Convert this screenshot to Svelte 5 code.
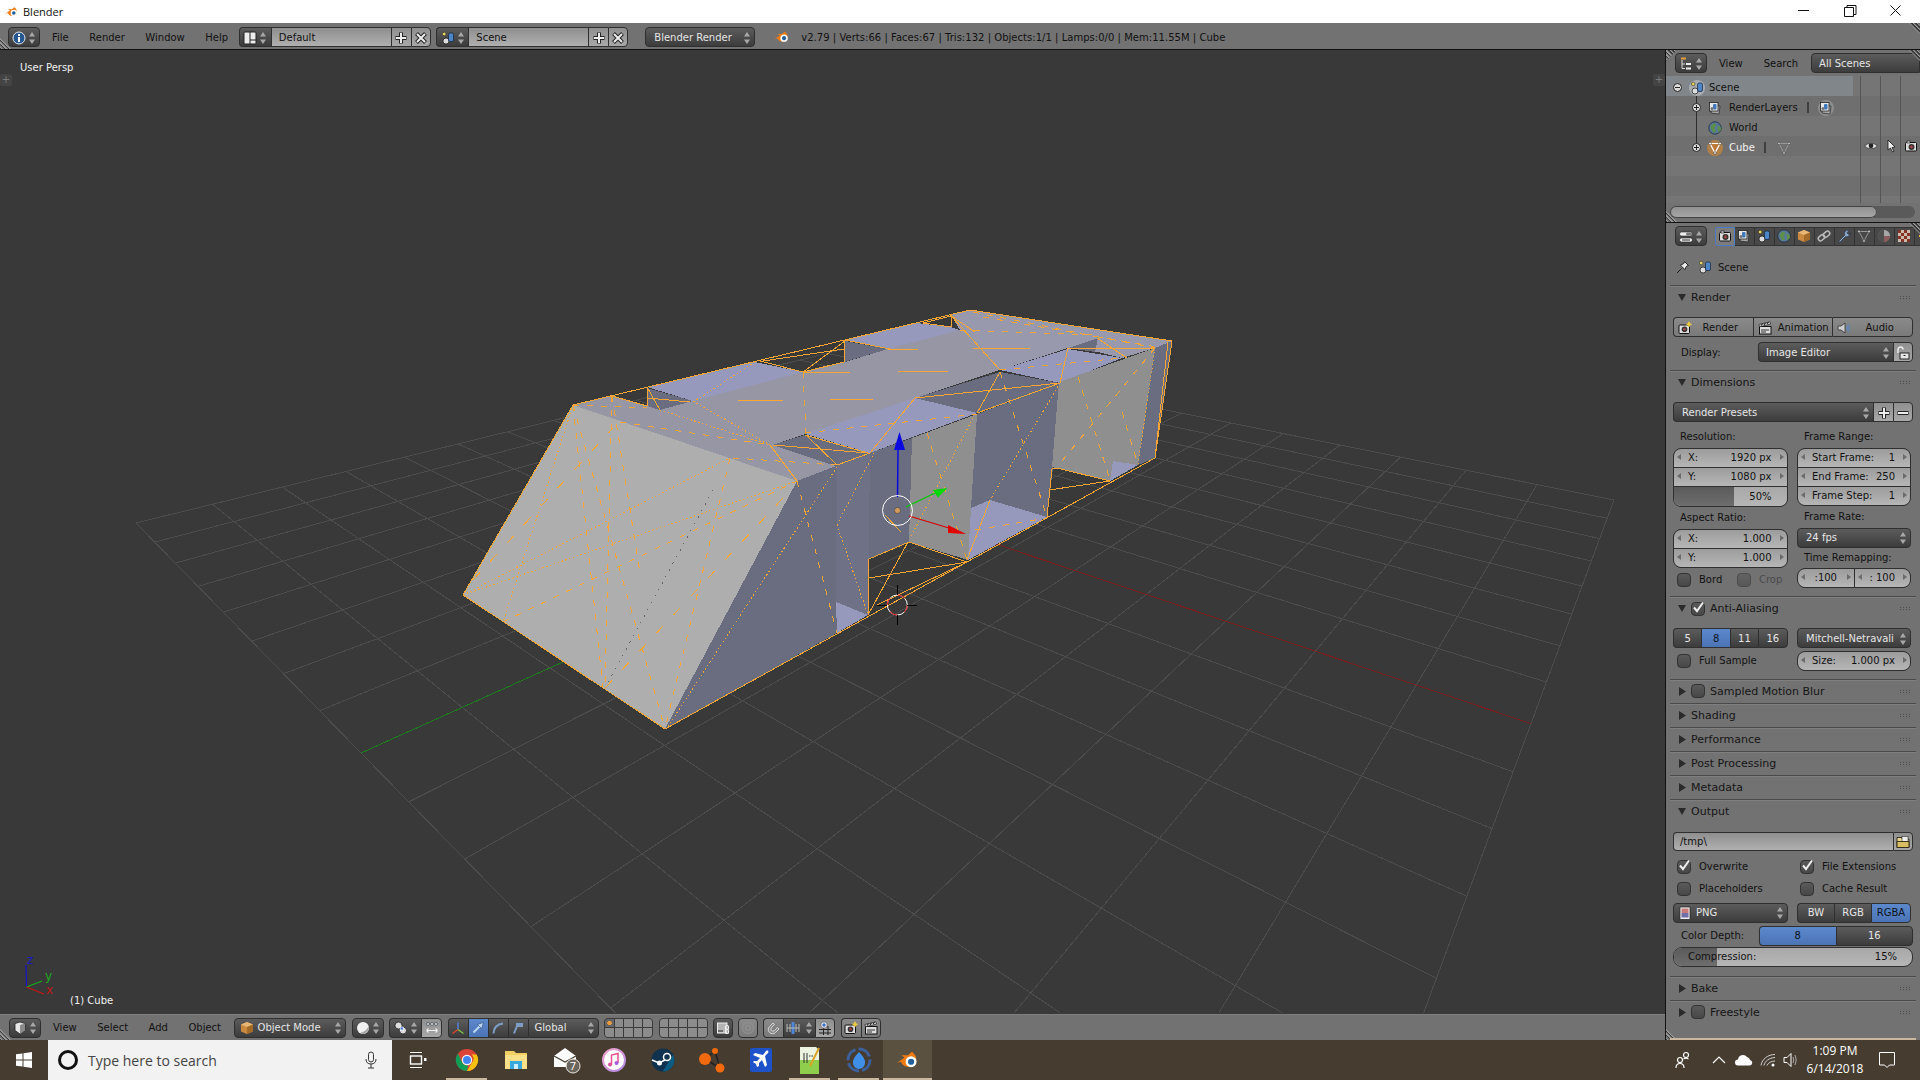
<script>
	// grid corners measured on the screenshot, grid runs -8..8 both ways
	function homography(src, dst) {
		const m = [];
		src.forEach(([u, v], i) => {
			const [x, y] = dst[i];
			m.push([u, v, 1, 0, 0, 0, -u * x, -v * x, x]);
			m.push([0, 0, 0, u, v, 1, -u * y, -v * y, y]);
		});
		for (let c = 0; c < 8; c++) {
			let p = c;
			for (let r = c + 1; r < 8; r++) if (Math.abs(m[r][c]) > Math.abs(m[p][c])) p = r;
			[m[c], m[p]] = [m[p], m[c]];
			for (let r = 0; r < 8; r++) {
				if (r === c) continue;
				const f = m[r][c] / m[c][c];
				for (let k = c; k < 9; k++) m[r][k] -= f * m[c][k];
			}
		}
		return m.map((row, i) => row[8] / row[i]);
	}

	const h = homography(
		[[-8, -8], [8, 8], [8, 0], [0, -8]],
		[[136, 523], [1614, 500], [1531, 723.6], [361, 753]]
	);
	const project = (u, v) => {
		const w = h[6] * u + h[7] * v + 1;
		return [(h[0] * u + h[1] * v + h[2]) / w, (h[3] * u + h[4] * v + h[5]) / w];
	};

	const GRID = '#4c4c4c';
	const gridLines = [];
	for (let i = -8; i <= 8; i++) {
		gridLines.push({ a: project(i, -8), b: project(i, 8), c: i === 0 ? '#1f7a1f' : GRID });
		gridLines.push({ a: project(-8, i), b: project(8, i), c: i === 0 ? '#7d1e1e' : GRID });
	}
	gridLines.sort((p, q) => (p.c === GRID ? 0 : 1) - (q.c === GRID ? 0 : 1));

	const LIGHT = '#aeaeae', BAND = '#9696a4', BLUE = '#9699bb', DARK = '#6a6c80', MID = '#8f8f8f';
	const faces = [
		[LIGHT, '573,405 463,595 665,729 797,481'],
		[BAND, '573,405 612,396 647,406 660,410 693,401 803,372 845,362 888,349 920,340 960,330 1000,370 915,398 805,434 772,445 836,466 797,481'],
		['#9899ac', '951,315 970,310 1172,341 1155,348 1122,358 1098,352 1068,348 1000,370 960,330'],
		[BLUE, '647,387 755,362 803,372 693,401'],
		[DARK, '647,388 693,401 660,410 647,406'],
		[BLUE, '845,340 917,323 950,327 960,330 888,349'],
		[DARK, '845,341 888,349 844,362'],
		[BLUE, '805,434 915,398 977,413 870,453'],
		[DARK, '805,435 870,453 836,466 772,445'],
		[BLUE, '1000,370 1068,349 1122,358 1060,383'],
		[DARK, '1098,338 1068,348 1095,352'],
		[DARK, '1000,372 1060,383 977,413 915,398'],
		[DARK, '797,481 836,466 870,453 912,438 909,542 869,559 868,615 837,633 665,729'],
		['#6f7186', '837,466 870,453 868,615 836,602'],
		[DARK, '977,414 1060,383 1053,468 1047,517 990,500 971,508'],
		[MID, '912,438 977,414 971,508 968,560 909,542'],
		[BLUE, '971,508 990,500 1047,517 968,560'],
		[MID, '1059,382 1155,348 1138,465 1113,461 1110,481 1052,467'],
		[BLUE, '1113,461 1138,465 1110,481'],
		[DARK, '1155,348 1172,341 1155,458 1138,465'],
		[BLUE, '836,602 868,615 837,633']
	];

	const dash = ['', '6 8', '1.5 2.5', '10 15'];
	// x1, y1, x2, y2, style: 0 solid, 1 dashed, 2 dotted, 3 sparse
	const wires = [
		[573, 405, 463, 595, 0], [463, 595, 665, 729, 0], [665, 729, 1155, 458, 0], [1155, 458, 1172, 341, 0],
		[1172, 341, 970, 310, 0], [970, 310, 573, 405, 0],
		[573, 405, 603, 688, 1], [612, 396, 605, 688, 1], [612, 396, 640, 573, 1], [573, 405, 503, 622, 2],
		[573, 405, 665, 729, 1], [463, 595, 730, 458, 2], [503, 622, 797, 481, 1], [463, 595, 797, 481, 2],
		[730, 458, 665, 729, 1], [473, 580, 613, 428, 3], [783, 498, 605, 688, 3], [837, 467, 667, 728, 2],
		[797, 481, 837, 633, 1], [770, 445, 797, 481, 0], [620, 422, 770, 445, 1], [733, 458, 837, 465, 1],
		[660, 410, 770, 445, 2], [573, 405, 647, 408, 1], [693, 401, 770, 445, 2], [803, 372, 806, 434, 1],
		[755, 362, 693, 402, 2], [760, 361, 803, 372, 0], [845, 341, 844, 362, 0], [803, 372, 844, 362, 0],
		[763, 361, 844, 349, 0], [803, 372, 845, 341, 0], [803, 372, 850, 372, 0], [738, 400, 783, 400, 0],
		[830, 399, 873, 399, 0], [773, 445, 868, 453, 0], [806, 435, 837, 465, 0], [805, 435, 868, 453, 0],
		[837, 465, 870, 453, 0], [870, 453, 915, 398, 0], [805, 433, 977, 414, 1], [837, 525, 868, 615, 2],
		[837, 525, 877, 447, 2], [612, 396, 647, 406, 0], [647, 387, 647, 406, 0], [647, 387, 660, 410, 0],
		[647, 398, 690, 402, 0], [915, 398, 1060, 383, 0], [977, 413, 1060, 383, 0], [1000, 372, 977, 413, 0],
		[1000, 372, 1047, 517, 1], [1060, 383, 990, 500, 2], [973, 418, 910, 538, 2], [927, 433, 967, 560, 1],
		[990, 500, 967, 560, 0], [975, 530, 1047, 518, 1], [952, 317, 1000, 370, 0], [1068, 348, 1060, 383, 0],
		[1068, 348, 1155, 348, 0], [1000, 370, 1122, 358, 1], [1078, 377, 1110, 480, 1], [1155, 348, 1057, 467, 1],
		[1122, 412, 1138, 465, 1], [973, 348, 1030, 348, 0], [898, 371, 948, 371, 0], [845, 340, 890, 349, 0],
		[888, 349, 918, 349, 0], [950, 315, 975, 332, 0], [960, 330, 1093, 335, 1], [983, 317, 1157, 347, 1],
		[973, 312, 1155, 348, 1], [869, 559, 909, 542, 0], [909, 542, 967, 562, 0], [869, 578, 967, 562, 0],
		[869, 559, 868, 615, 0], [908, 542, 868, 615, 0], [877, 605, 967, 562, 0], [1052, 469, 1047, 517, 0],
		[1052, 469, 1057, 468, 0], [1057, 468, 1110, 481, 0], [1049, 490, 1110, 481, 0], [1155, 348, 1138, 465, 2],
		[1168, 342, 1155, 458, 0], [1097, 338, 1127, 358, 0], [923, 323, 951, 316, 0], [923, 323, 951, 327, 0],
		[951, 315, 951, 327, 0], [885, 515, 901, 532, 0]
	];

	const tabs = ['camera', 'layers', 'scene', 'world', 'box', 'link', 'wrench', 'meshGrey', 'material', 'checker', 'particle'];

	const I = {
		blender:
			'<path d="M.5 8.8 5 5.6 3 4.3h4L9.3 2.2l1 .8a4.6 4.6 0 1 1-6.3 6.8L2.8 8z" fill="#ef7a12"/><circle cx="8.8" cy="8" r="3.2" fill="#fff"/><circle cx="8.8" cy="8" r="1.8" fill="#20609f"/>',
		info: '<circle cx="7" cy="7" r="6" fill="#27578f" stroke="#dfe6ee"/><path d="M6 6h2v5H6zM6 3h2v2H6z" fill="#fff"/>',
		layout: '<rect x="1" y="1" width="12" height="12" rx="1" fill="#eee" stroke="#222"/><path d="M7 1v12M7 9h6" stroke="#222"/>',
		scene: '<circle cx="5" cy="10" r="3" fill="#ddd" stroke="#111" stroke-width=".7"/><rect x="7.5" y="2" width="5" height="8.5" rx="1.5" fill="#4d86c8" stroke="#13233a" stroke-width=".7"/><circle cx="3.2" cy="3" r="1.8" fill="#e6d85a" stroke="#333" stroke-width=".6"/>',
		plus: '<path d="M7 1.5v11M1.5 7h11" stroke="#222" stroke-width="4"/><path d="M7 2v10M2 7h10" stroke="#eee" stroke-width="2"/>',
		minus: '<path d="M1.5 7h11" stroke="#222" stroke-width="4"/><path d="M2 7h10" stroke="#eee" stroke-width="2"/>',
		cross: '<path d="M2.5 2.5l9 9M11.5 2.5l-9 9" stroke="#222" stroke-width="4"/><path d="M3 3l8 8M11 3l-8 8" stroke="#eee" stroke-width="2"/>',
		layers: '<path d="M4 4l8 1-1 8-8-1z" fill="#aaa" stroke="#222" stroke-width=".7"/><rect x="1.5" y="1.5" width="8.5" height="8.5" fill="#e8e8e8" stroke="#222" stroke-width=".8"/><rect x="5" y="3" width="3.5" height="5.5" rx="1" fill="#3f78bb"/><circle cx="4" cy="7.5" r="1.6" fill="#777"/>',
		world: '<circle cx="7" cy="7" r="6.2" fill="#56789c" stroke="#1c2a38" stroke-width=".8"/><path d="M2.5 5 6 2.5 8.5 4 6.5 7 8 10 5.5 12 3.5 8.5zM9.5 5l3 .5.5 3.5-3 2.5z" fill="#5d8f4c"/>',
		mesh: '<path d="M2 2.5h10L7 12z" fill="#c8752a" fill-opacity=".5" stroke="#fff" stroke-width="1.2"/><g fill="#fff" stroke="#222" stroke-width=".5"><circle cx="2" cy="2.5" r="1.3"/><circle cx="12" cy="2.5" r="1.3"/><circle cx="7" cy="12" r="1.3"/></g>',
		meshGrey: '<path d="M2 2.5h10L7 12z" fill="none" stroke="#999"/><g fill="#ccc" stroke="#333" stroke-width=".5"><circle cx="2" cy="2.5" r="1.3"/><circle cx="12" cy="2.5" r="1.3"/><circle cx="7" cy="12" r="1.3"/></g>',
		eye: '<path d="M.5 7Q7 1.5 13.5 7 7 12.5.5 7z" fill="#eee" stroke="#222" stroke-width=".6"/><circle cx="7" cy="6.8" r="2.4" fill="#222"/>',
		cursor: '<path d="M4 1v10l2.5-2 2 4 1.5-.8-2-3.7 3-.5z" fill="#eee" stroke="#111" stroke-width=".8"/>',
		camera: '<rect x="1.5" y="3.5" width="11" height="8.5" rx="1" fill="#ddd" stroke="#111"/><rect x="3" y="2" width="3" height="2" fill="#ddd" stroke="#111" stroke-width=".6"/><circle cx="7.5" cy="8" r="3" fill="#333"/><circle cx="7.5" cy="8" r="1.4" fill="#a44"/>',
		renderCam: '<rect x="1" y="4" width="10.5" height="8.5" rx="1" fill="#ddd" stroke="#111"/><circle cx="6.5" cy="8.3" r="2.8" fill="#333"/><circle cx="6.5" cy="8.3" r="1.3" fill="#a44"/><path d="M11 .8v5M8.5 3.3h5" stroke="#f0cc3c" stroke-width="1.7"/>',
		tree: '<path d="M2 1.5h5" stroke="#e8a23c" stroke-width="2"/><path d="M3 3v8.5h3M3 7h3" stroke="#ddd" fill="none"/><path d="M7 7h5M7 11.5h5" stroke="#eee" stroke-width="2"/>',
		props: '<rect x=".5" y="2" width="13" height="4" rx="2" fill="#eee" stroke="#222" stroke-width=".6"/><rect x="7" y="2.5" width="6" height="3" rx="1.5" fill="#777"/><rect x=".5" y="8" width="13" height="4" rx="2" fill="#eee" stroke="#222" stroke-width=".6"/><path d="M3 10h8" stroke="#333"/>',
		box: '<path d="M7 1l6 2.5v7L7 13l-6-2.5v-7z" fill="#c98a3f"/><path d="M7 1l6 2.5L7 6 1 3.5z" fill="#e8b776"/><path d="M7 6v7l6-2.5v-7z" fill="#a36a28"/>',
		link: '<g fill="none" stroke="#bbb" stroke-width="1.5"><rect x="1" y="6.5" width="7" height="4.5" rx="2.2" transform="rotate(-40 4.5 8.7)"/><rect x="6" y="3" width="7" height="4.5" rx="2.2" transform="rotate(-40 9.5 5.2)"/></g>',
		wrench: '<path d="M1.5 12.5 8 6a3.2 3.2 0 0 1 4-4.5L10 3.5l.8 1.6 1.7.3L13 3.500A3.5 3.5 0 0 1 8.5 7.5L3 13z" fill="#8fb0d6" stroke="#223" stroke-width=".5"/>',
		material: '<circle cx="7" cy="7" r="6" fill="#7d7d7d"/><path d="M7 1a6 6 0 0 0 0 12z" fill="#4f4f4f"/><path d="M7 1a6 6 0 0 1 6 6H7z" fill="#a6a6a6"/><path d="M7 7h6a6 6 0 0 1-6 6z" fill="#8b5c5c"/>',
		checker: '<rect x="1" y="1" width="12" height="12" fill="#c9baa9"/><path d="M1 1h3v3H1zM7 1h3v3H7zM4 4h3v3H4zM10 4h3v3h-3zM1 7h3v3H1zM7 7h3v3H7zM4 10h3v3H4zM10 10h3v3h-3z" fill="#86332a"/>',
		particle: '<path d="M2 7h12" stroke="#e8b33c" stroke-width="2"/>',
		pin: '<path d="M1 13l4.5-4.5M8.5 1.5l4 4-2 .7-1.7 3.3-4.3-4.3 3.3-1.7z" fill="#eee" stroke="#222"/>',
		clapper: '<rect x="1.5" y="5.5" width="11.5" height="7.5" fill="#ddd" stroke="#111"/><path d="M1 3.5 12 .8l.6 2.2L1.5 5.8z" fill="#ddd" stroke="#111" stroke-width=".6"/><path d="M3 9h8M3 11h5" stroke="#333"/><path d="M3 4.5l1.5-1.9M6 3.8l1.5-1.9M9 3l1.5-1.9" stroke="#222" stroke-width="1.1"/>',
		speaker: '<path d="M1 5h3l4-3v10L4 9H1z" fill="#ccc" stroke="#222" stroke-width=".7"/><path d="M9.5 4.5q2 2.5 0 5M11 3q3.2 4 0 8" stroke="#5a86c6" fill="none" stroke-width="1.1"/>',
		lock: '<rect x="4" y="7" width="9" height="6" fill="#e8e8e8" stroke="#222"/><path d="M2 7V3.5a2.5 2.5 0 0 1 5 0" stroke="#eee" fill="none" stroke-width="1.4"/><path d="M7.5 9.5h2" stroke="#222"/>',
		folder: '<path d="M1 4V2.5h5V4h7v8.5H1z" fill="#e9d68f" stroke="#2a2413" stroke-width=".9"/><rect x="6" y="1.5" width="6" height="5" fill="#eee" stroke="#333" stroke-width=".6"/><path d="M1 6.5h12v6H1z" fill="#d9bd62" stroke="#2a2413" stroke-width=".9"/>',
		image: '<rect x="2" y="1" width="10" height="12.5" fill="#eee" stroke="#222" stroke-width=".7"/><rect x="3.5" y="2.5" width="7" height="4.5" fill="#c97a7a"/><rect x="3.5" y="7" width="7" height="4.5" fill="#6e6ea8"/>',
		shade: '<path d="M2 2.5 7 1l5 1.5v7L7 13l-5-3.5z" fill="#e8e8e8" stroke="#222" stroke-width=".8"/><path d="M7 4 12 2.5v7L7 13z" fill="#8a8a8a"/>',
		sphere: '<circle cx="7" cy="7" r="6" fill="#f2f2f2"/><path d="M7 13a6 6 0 0 0 5.5-8Q11 10 4 11.9 5.5 13 7 13z" fill="#a9a9a9"/>',
		pivot: '<circle cx="4.5" cy="4.5" r="3.5" fill="#ddd" stroke="#111" stroke-width=".7"/><circle cx="9" cy="9.5" r="3.5" fill="#ddd" stroke="#111" stroke-width=".7"/><rect x="6.2" y="6" width="3" height="3" fill="#3a6fd0" stroke="#fff" stroke-width=".7"/>',
		origin: '<g fill="#cfd8e6" stroke="#222" stroke-width=".5"><circle cx="3" cy="3" r="1.5"/><circle cx="7" cy="3" r="1.5"/><circle cx="11" cy="3" r="1.5"/></g><path d="M1.5 9.5h11M1.5 9.5l2-2M1.5 9.5l2 2M12.5 9.5l-2-2M12.5 9.5l-2 2" stroke="#eee" fill="none" stroke-width="1.1"/>',
		axes: '<path d="M7 8.5V1.5" stroke="#4f7fd6" stroke-width="1.5"/><path d="M7 8.5 1.5 12.5" stroke="#d9442f" stroke-width="1.5"/><path d="M7 8.5 12.5 12.5" stroke="#7cc043" stroke-width="1.5"/>',
		arrow: '<path d="M2.5 11.5 9 5" stroke="#bcd6f4" stroke-width="2"/><path d="M12.5 1.5 6.5 3.5l4 4z" fill="#bcd6f4" stroke="#24405f" stroke-width=".5"/>',
		rotate: '<path d="M2.5 12.5Q3 3.5 12 2.5" fill="none" stroke="#7d9dc4" stroke-width="2"/>',
		scale: '<path d="M3 12.5 6 5" stroke="#7d9dc4" stroke-width="2"/><rect x="5" y="2" width="7" height="4" fill="#7d9dc4"/>',
		lockLayers: '<rect x="1.5" y="2" width="9.5" height="10" fill="#b5b5b5" stroke="#eee"/><path d="M2 10h5" stroke="#222"/><rect x="9.5" y="4.5" width="3" height="4" rx="1.3" fill="none" stroke="#eee" stroke-width="1.2"/><rect x="9.5" y="8.5" width="3" height="4" rx="1.3" fill="none" stroke="#eee" stroke-width="1.2"/>',
		ring: '<circle cx="7" cy="7" r="5.5" fill="none" stroke="#8e8e8e" stroke-width="1.5"/><circle cx="7" cy="7" r="2.5" fill="none" stroke="#8e8e8e" stroke-width="1.5"/>',
		magnet: '<path d="M2.5 5.5 6 2l1.5 1.5-3 3a2 2 0 0 0 3 3l3-3L12 8l-3.500 3.500a4.200 4.200 0 0 1-6-6z" fill="#8e8e8e" stroke="#e6e6e6" stroke-width=".8"/>',
		snapEl: '<path d="M1 3v8M4 3v8M10 3v8M13 3v8" stroke="#bbb"/><path d="M7 1v12" stroke="#4f86d8" stroke-width="3"/><path d="M1 7h12" stroke="#bbb"/>',
		snapGrid: '<path d="M1 8.5h12M1 12h12M5.5 5v9M10 5v9" stroke="#222"/><circle cx="6" cy="4" r="3.2" fill="#eee" stroke="#333" stroke-width=".5"/><circle cx="6" cy="4" r="1.7" fill="#3a6fd0"/>'
	};
</script>

{#snippet ic(name, size = 14)}
	<svg class="ic" width={size} height={size} viewBox="0 0 14 14">{@html I[name]}</svg>
{/snippet}

{#snippet updown()}
	<svg class="ud" width="8" height="14" viewBox="0 0 8 14"><path d="M1 5.5 4 1l3 4.5zM1 8.5h6L4 13z" /></svg>
{/snippet}

{#snippet sel(name)}
	<div class="btn dark sel">{@render ic(name)}{@render updown()}</div>
{/snippet}

{#snippet hatch(pos)}
	<div class="hatch {pos}"></div>
{/snippet}

{#snippet num(label, value)}
	<div class="num"><span>{label}</span><span>{value}</span></div>
{/snippet}

{#snippet slider(label, value, pct)}
	<div class="slider">
		<div class="fill" style="width:{pct}%"></div>
		<span class="slabel">{label}</span><span>{value}</span>
	</div>
{/snippet}

{#snippet check(on, dim)}
	<span class="check" class:dim>
		{#if on}
			<svg width="14" height="14" viewBox="0 0 14 14"><path d="M3 6.5 6 10 12 1.5" fill="none" stroke="#eee" stroke-width="2" /></svg>
		{/if}
	</span>
{/snippet}

{#snippet head(title, open, hasCheck, checked)}
	<div class="shead">
		<svg class="tri" width="8" height="9" viewBox="0 0 8 9">
			{#if open}<path d="M0 1h8L4 8z" />{:else}<path d="M1 0l7 4.5L1 9z" />{/if}
		</svg>
		{#if hasCheck}{@render check(checked)}{/if}
		<span class="stitle">{title}</span>
		<span class="grip"></span>
	</div>
{/snippet}

{#snippet label(text, kind)}
	<label class="cb"><span class="cbinner">{@render check(kind === 'on', kind === 'dim')}</span><span class:muted={kind === 'dim'}>{text}</span></label>
{/snippet}

{#snippet expander(open)}
	<span class="exp"><svg width="9" height="9" viewBox="0 0 9 9"><circle cx="4.5" cy="4.5" r="4" fill="#ddd" stroke="#222" /><path d={open ? 'M2 4.5h5' : 'M2 4.5h5M4.5 2v5'} stroke="#222" /></svg></span>
{/snippet}

<div class="page">
	<header class="title">
		{@render ic('blender')}
		<span class="tname">Blender</span>
		<svg class="winctl" width="122" height="23" viewBox="0 0 122 23">
			<path d="M0 10.5h11" stroke="#111" fill="none" />
			<path d="M46.5 7.5h9v9h-9zM49 7.5v-2h9v9h-2.5" stroke="#111" fill="none" />
			<path d="M92.5 5.5l10 10M102.5 5.5l-10 10" stroke="#111" fill="none" />
		</svg>
	</header>

	<div class="bar info">
		{@render hatch('tl')}
		{@render hatch('tr')}
		{@render sel('info')}
		<nav class="menu menu-info"><span>File</span><span>Render</span><span>Window</span><span>Help</span></nav>
		<div class="group">
			{@render sel('layout')}
			<div class="btn field namef">Default</div>
			<div class="btn light sq">{@render ic('plus')}</div>
			<div class="btn light sq">{@render ic('cross')}</div>
		</div>
		<div class="group scene-group">
			{@render sel('scene')}
			<div class="btn field namef">Scene</div>
			<div class="btn light sq">{@render ic('plus')}</div>
			<div class="btn light sq">{@render ic('cross')}</div>
		</div>
		<div class="btn dark select engine"><span>Blender Render</span>{@render updown()}</div>
		<span class="biglogo">{@render ic('blender', 16)}</span>
		<span class="status">v2.79 | Verts:66 | Faces:67 | Tris:132 | Objects:1/1 | Lamps:0/0 | Mem:11.55M | Cube</span>
	</div>

	<main class="main">
		<section class="viewcol">
			<div class="view">
				<svg class="scene3d" viewBox="0 50 1665 963" width="1665" height="963">
					<g shape-rendering="crispEdges">
						{#each gridLines as l}
							<line x1={l.a[0]} y1={l.a[1]} x2={l.b[0]} y2={l.b[1]} stroke={l.c} />
						{/each}
						{#each faces as f}
							<polygon points={f[1]} fill={f[0]} />
						{/each}
						{#each wires as w}
							<line x1={w[0]} y1={w[1]} x2={w[2]} y2={w[3]} stroke="#ffa535" stroke-dasharray={dash[w[4]]} />
						{/each}
						<line x1="713" y1="490" x2="605" y2="688" stroke="#666" stroke-dasharray="1.5 6" />
					</g>
					<!-- object gizmo -->
					<path d="M897.5 497 898 450" stroke="#0a0ae0" stroke-width="1.5" />
					<polygon points="899.5,432 894,450 905,450" fill="#0a0ae0" />
					<path d="M906 507 935 493" stroke="#00cc00" stroke-width="1.2" />
					<polygon points="947.5,488 933,490 938,497.5" fill="#00d800" />
					<path d="M909 516 949 528" stroke="#d80000" stroke-width="1.2" />
					<polygon points="966,534 948,525 948,533" fill="#e00000" />
					<circle cx="897.5" cy="510.5" r="15" fill="none" stroke="#fff" />
					<circle cx="897.5" cy="510.5" r="3" fill="#d39a5d" stroke="#333" stroke-width=".5" />
					<!-- 3d cursor -->
					<circle cx="897.3" cy="605" r="10" fill="none" stroke="#fff" />
					<circle cx="897.3" cy="605" r="10" fill="none" stroke="#e01010" stroke-dasharray="7.8 7.9" />
					<path d="M877 605h10M907 605h10M897.5 585v10M897.5 615v10" stroke="#000" shape-rendering="crispEdges" />
					<!-- corner axes -->
					<path d="M26.5 987 26 965" stroke="#1414c8" stroke-width="1.2" />
					<path d="M26.5 987 42 981" stroke="#18b018" stroke-width="1.2" />
					<path d="M26.5 987 44 994" stroke="#c81414" stroke-width="1.2" />
				</svg>
				<span class="ovl persp">User Persp</span>
				<span class="ovl cube">(1) Cube</span>
				<span class="ovl axis az">z</span>
				<span class="ovl axis ay">y</span>
				<span class="ovl axis ax">x</span>
				<span class="ovl tab tabl">+</span>
				<span class="ovl tab tabr">+</span>
			</div>
			<div class="bar v3d">
				{@render hatch('bl')}
				{@render sel('shade')}
				<nav class="menu menu-3d"><span>View</span><span>Select</span><span>Add</span><span>Object</span></nav>
				<div class="tools">
					<div class="btn dark select omode">{@render ic('box')}<span>Object Mode</span>{@render updown()}</div>
					{@render sel('sphere')}
					<div class="group">
						{@render sel('pivot')}
						<div class="btn light sq wide">{@render ic('origin')}</div>
					</div>
					<div class="group">
						<div class="btn dark sq">{@render ic('axes')}</div>
						<div class="btn blue sq">{@render ic('arrow')}</div>
						<div class="btn dark sq">{@render ic('rotate')}</div>
						<div class="btn dark sq">{@render ic('scale')}</div>
						<div class="btn dark select glob"><span>Global</span>{@render updown()}</div>
					</div>
					<div class="layers">
						{#each Array(10) as _, i}<span class:act={i === 0}></span>{/each}
					</div>
					<div class="layers">
						{#each Array(10) as _}<span></span>{/each}
					</div>
					<div class="btn dark sq single">{@render ic('lockLayers')}</div>
					<div class="btn mid sq single">{@render ic('ring')}</div>
					<div class="group">
						<div class="btn mid sq">{@render ic('magnet')}</div>
						<div class="btn dark select snap">{@render ic('snapEl')}{@render updown()}</div>
						<div class="btn light sq">{@render ic('snapGrid')}</div>
					</div>
					<div class="group">
						<div class="btn mid sq">{@render ic('renderCam')}</div>
						<div class="btn mid sq">{@render ic('clapper')}</div>
					</div>
				</div>
			</div>
		</section>

		<aside class="side">
			<section class="outliner">
				{@render hatch('tl')}
				{@render hatch('tr')}
				{@render hatch('bl')}
				<div class="ohead">
					{@render sel('tree')}
					<span class="om om1">View</span>
					<span class="om om2">Search</span>
					<div class="btn dark allsc">All Scenes</div>
				</div>
				<div class="tree">
					<svg class="treelines" width="254" height="127" viewBox="0 0 254 127">
						<path d="M13.5 11h5M30.5 20v51" stroke="#2c2c2c" fill="none" />
						<g fill="none" stroke="#555"><path d="M194.5 0v127M214.5 0v127M234.5 0v127" /></g>
					</svg>
					<div class="row sel0">
						{@render expander(true)}
						<span class="halo">{@render ic('scene')}</span>
						<span>Scene</span>
					</div>
					<div class="row lvl">
						{@render expander(false)}
						<span class="noh">{@render ic('layers')}</span>
						<span>RenderLayers</span>
						<span class="bar1"></span>
						<span class="halo h2">{@render ic('layers')}</span>
					</div>
					<div class="row lvl">
						<span class="exp"></span>
						<span class="noh">{@render ic('world')}</span>
						<span>World</span>
					</div>
					<div class="row lvl">
						{@render expander(false)}
						<span class="halo orange">{@render ic('mesh')}</span>
						<span class="white">Cube</span>
						<span class="bar1"></span>
						<span class="mesh2">{@render ic('meshGrey')}</span>
						<span class="restrict">{@render ic('eye')}{@render ic('cursor')}{@render ic('camera')}</span>
					</div>
				</div>
				<div class="hscroll"><div class="thumb"></div></div>
			</section>

			<section class="props">
				{@render hatch('tr')}
				{@render hatch('bl')}
				<div class="phead">
					{@render sel('props')}
					<div class="tabs">
						{#each tabs as t, i}
							<span class="ptab" class:on={i === 0}>{@render ic(t)}</span>
						{/each}
					</div>
				</div>
				<div class="crumb">
					{@render ic('pin')}
					<span class="crumbscene">{@render ic('scene')}</span>
					<span class="crumbname">Scene</span>
				</div>
				<div class="panels">
					<section class="sec">
						{@render head('Render', true)}
						<div class="body render-body">
							<div class="joined r3">
								<div class="btn mid wide1">{@render ic('renderCam')}<span>Render</span></div>
								<div class="btn mid wide1">{@render ic('clapper')}<span>Animation</span></div>
								<div class="btn mid wide1">{@render ic('speaker')}<span>Audio</span></div>
							</div>
							<div class="disp">
								<span class="lbl">Display:</span>
								<div class="joined dispsel">
									<div class="btn dark select imged"><span>Image Editor</span>{@render updown()}</div>
									<div class="btn light sq">{@render ic('lock')}</div>
								</div>
							</div>
						</div>
					</section>

					<section class="sec">
						{@render head('Dimensions', true)}
						<div class="body dim-body">
							<div class="joined presets">
								<div class="btn dark select pres"><span>Render Presets</span>{@render updown()}</div>
								<div class="btn light sq">{@render ic('plus')}</div>
								<div class="btn light sq">{@render ic('minus')}</div>
							</div>
							<div class="cols">
								<div class="col">
									<div class="lbl lh">Resolution:</div>
									<div class="stack">
										{@render num('X:', '1920 px')}
										{@render num('Y:', '1080 px')}
										{@render slider('', '50%', 53)}
									</div>
									<div class="lbl lh2">Aspect Ratio:</div>
									<div class="stack">
										{@render num('X:', '1.000')}
										{@render num('Y:', '1.000')}
									</div>
									<div class="bc">
										{@render label('Bord', 'off')}
										{@render label('Crop', 'dim')}
									</div>
								</div>
								<div class="col">
									<div class="lbl lh">Frame Range:</div>
									<div class="stack">
										{@render num('Start Frame:', '1')}
										{@render num('End Frame:', '250')}
										{@render num('Frame Step:', '1')}
									</div>
									<div class="lbl lh2">Frame Rate:</div>
									<div class="btn dark select"><span>24 fps</span>{@render updown()}</div>
									<div class="lbl lh3">Time Remapping:</div>
									<div class="stack hz">
										{@render num(':100', '')}
										{@render num(': 100', '')}
									</div>
								</div>
							</div>
						</div>
					</section>

					<section class="sec">
						{@render head('Anti-Aliasing', true, true, true)}
						<div class="body aa-body">
							<div class="cols">
								<div class="joined aa">
									<div class="btn dark">5</div>
									<div class="btn blue">8</div>
									<div class="btn dark">11</div>
									<div class="btn dark">16</div>
								</div>
								<div class="btn dark select"><span>Mitchell-Netravali</span>{@render updown()}</div>
							</div>
							<div class="cols aa2">
								{@render label('Full Sample', 'off')}
								<div class="stack">{@render num('Size:', '1.000 px')}</div>
							</div>
						</div>
					</section>

					<section class="sec">{@render head('Sampled Motion Blur', false, true, false)}</section>
					<section class="sec">{@render head('Shading', false)}</section>
					<section class="sec">{@render head('Performance', false)}</section>
					<section class="sec">{@render head('Post Processing', false)}</section>
					<section class="sec">{@render head('Metadata', false)}</section>

					<section class="sec">
						{@render head('Output', true)}
						<div class="body out-body">
							<div class="joined path">
								<div class="pathf">/tmp\</div>
								<div class="btn light sq">{@render ic('folder')}</div>
							</div>
							<div class="cols chk chk1">
								{@render label('Overwrite', 'on')}
								{@render label('File Extensions', 'on')}
							</div>
							<div class="cols chk">
								{@render label('Placeholders', 'off')}
								{@render label('Cache Result', 'off')}
							</div>
							<div class="cols fmt">
								<div class="btn dark select pngs">{@render ic('image')}<span>PNG</span>{@render updown()}</div>
								<div class="joined bw">
									<div class="btn dark">BW</div>
									<div class="btn dark">RGB</div>
									<div class="btn blue">RGBA</div>
								</div>
							</div>
							<div class="depth">
								<span class="lbl">Color Depth:</span>
								<div class="joined dep">
									<div class="btn blue">8</div>
									<div class="btn dark">16</div>
								</div>
							</div>
							{@render slider('Compression:', '15%', 18)}
						</div>
					</section>

					<section class="sec">{@render head('Bake', false)}</section>
					<section class="sec">{@render head('Freestyle', false, true, false)}</section>
				</div>
			</section>
		</aside>
	</main>

	<footer class="task">
		<svg class="start" width="16" height="16" viewBox="0 0 16 16"><path d="M0 2.3 6.5 1.4V7.5H0zM7.5 1.2 16 0V7.5H7.5zM0 8.5H6.5V14.6L0 13.7zM7.5 8.5H16V16L7.5 14.8z" fill="#fff" /></svg>
		<div class="search">
			<span class="cortana"></span>
			<span class="stext">Type here to search</span>
			<svg class="mic" width="12" height="18" viewBox="0 0 12 18"><rect x="3.5" y="1" width="5" height="10" rx="2.5" fill="none" stroke="#333" /><path d="M1 8q0 5 5 5t5-5M6 13v4M3 17h6" fill="none" stroke="#333" /></svg>
		</div>
		<div class="apps">
			<span class="app tv"><svg width="18" height="16" viewBox="0 0 18 16"><path d="M1 .5h12M1 15.5h12" stroke="#fff" fill="none" /><rect x="1.5" y="4" width="11" height="8" fill="none" stroke="#fff" stroke-width="1.4" /><rect x="15" y="6" width="2.5" height="3" fill="#fff" /></svg></span>
			<span class="app on"><svg width="24" height="24" viewBox="0 0 24 24"><circle cx="12" cy="12" r="11" fill="#db4437" /><path d="M21.6 6.5A11 11 0 0 1 12 23l5-8.5a5.5 5.5 0 0 0-.3-8z" fill="#f4c20d" /><path d="M12 23A11 11 0 0 1 3 5.5L7.3 15A5.5 5.5 0 0 0 13 17.3z" fill="#0f9d58" /><circle cx="12" cy="12" r="5.2" fill="#fff" /><circle cx="12" cy="12" r="4" fill="#4285f4" /></svg></span>
			<span class="app"><svg width="22" height="22" viewBox="0 0 22 22"><path d="M0 2h9l2 2h11v16H0z" fill="#f2cf63" /><path d="M0 6h22v14H0z" fill="#fbe08a" /><path d="M5 12h12v8H5z" fill="#39a9dc" /><path d="M9 15h4v5H9z" fill="#cfeefc" /></svg></span>
			<span class="app mail"><svg width="30" height="30" viewBox="0 0 30 30"><path d="M1 11 12 3l11 8v11H1z" fill="#fff" /><path d="M1 11l11 6 11-6" fill="none" stroke="#463d30" stroke-width="1.3" /><circle cx="20" cy="21" r="7" fill="#6b655c" stroke="#e9e6e0" /><text x="20" y="25" text-anchor="middle" font-size="11" font-family="Open Sans" fill="#fff">7</text></svg></span>
			<span class="app"><svg width="24" height="24" viewBox="0 0 24 24"><defs><linearGradient id="tun" x1="0" y1="0" x2="1" y2="1"><stop offset="0" stop-color="#f3a0c8" /><stop offset="1" stop-color="#b18ae6" /></linearGradient></defs><circle cx="12" cy="12" r="11" fill="#fff" stroke="url(#tun)" stroke-width="2" /><path d="M9.5 16.5V7L16 5.5V15" fill="none" stroke="#e8508e" stroke-width="1.5" /><circle cx="8" cy="16.5" r="2" fill="#d94f9c" /><circle cx="14.5" cy="15" r="2" fill="#a55be0" /></svg></span>
			<span class="app"><svg width="24" height="26" viewBox="0 0 24 26"><circle cx="12" cy="13" r="11.5" fill="#10324f" /><path d="M12 24.5a11.5 11.5 0 0 0 10-17L12 24z" fill="#0c5d84" /><circle cx="16" cy="10" r="3.5" fill="none" stroke="#fff" stroke-width="1.5" /><circle cx="8.5" cy="16" r="2.5" fill="#fff" /><path d="M1 13l7 3 6-3" stroke="#fff" stroke-width="1.5" fill="none" /></svg></span>
			<span class="app"><svg width="26" height="26" viewBox="0 0 26 26"><path d="M6 12 16 4l5 17z" fill="none" stroke="#222" stroke-width="1.5" /><circle cx="6" cy="12" r="6" fill="#f26a0d" /><circle cx="16" cy="4" r="3" fill="#f26a0d" /><circle cx="21" cy="21" r="4.5" fill="#f26a0d" /></svg></span>
			<span class="app"><svg width="22" height="24" viewBox="0 0 22 24"><rect width="22" height="24" rx="2" fill="#1d52c9" /><path d="M16 3c2-1 3 0 2 2l-3 3 2 9-2 2-3-7-3 3v3l-2 1-1-3-3-2 1-1h3l3-3-7-3 2-2 8 2z" fill="#fff" /></svg></span>
			<span class="app on"><svg width="22" height="30" viewBox="0 0 22 30"><path d="M1 2h16l3 3v24H1z" fill="#ecf3e0" /><path d="M1 15h19v14H1z" fill="#8fce4c" /><path d="M5 8v10M8 8v10" stroke="#333" /><path d="M10 11h4" stroke="#333" stroke-dasharray="1.5 1" /><path d="M11 21 20 3" stroke="#d9a426" stroke-width="2" /></svg></span>
			<span class="app on"><svg width="26" height="28" viewBox="0 0 26 28"><circle cx="13" cy="14" r="11" fill="none" stroke="#3d5f9c" stroke-width="3" stroke-dasharray="14 3" /><path d="M13 6q7 7 6 11a6 6 0 0 1-12 0q-1-4 6-11z" fill="#3f8fe8" /></svg></span>
			<span class="app cur"><svg width="26" height="24" viewBox="0 0 14 14">{@html I.blender}</svg></span>
		</div>
		<div class="tray">
			<svg class="people" width="16" height="18" viewBox="0 0 16 18"><g fill="none" stroke="#fff" stroke-width="1.2"><circle cx="5" cy="9" r="2.5" /><path d="M1 17q0-4.5 4-4.5t4 4.5" /><circle cx="11" cy="4" r="2.5" /><path d="M8.5 8q2.5-1.5 5 0" /></g></svg>
			<svg class="chev" width="14" height="8" viewBox="0 0 14 8"><path d="M1 7l6-6 6 6" fill="none" stroke="#fff" stroke-width="1.2" /></svg>
			<svg class="cloud" width="18" height="12" viewBox="0 0 18 12"><path d="M3 11.5a3 3 0 0 1 0-6 5 5 0 0 1 9-2.5 3.8 3.8 0 0 1 3 3 2.8 2.8 0 0 1 0 5.5z" fill="#fff" /></svg>
			<svg class="wifi" width="16" height="14" viewBox="0 0 16 14"><g fill="none" stroke="#cfcfcf"><path d="M1 12.5C2 6 8 1.5 15 1.5M4 12.5C5 8 9 5 15 4.5M7 12.5C8 10 11 8 15 8" /></g><circle cx="13" cy="12" r="1.5" fill="#fff" /></svg>
			<svg class="vol" width="17" height="16" viewBox="0 0 17 16"><path d="M1 5.5h3l4-4v13l-4-4H1z" fill="none" stroke="#fff" /><path d="M10 5q1.5 3 0 6M12 3q2.5 5 0 10" fill="none" stroke="#aaa" /></svg>
			<div class="clock"><span>1:09 PM</span><span>6/14/2018</span></div>
			<svg class="note" width="16" height="16" viewBox="0 0 16 16"><path d="M.5.5h15v12.5h-5l-2.500 2.500-2.500-2.500h-5z" fill="none" stroke="#fff" /></svg>
		</div>
	</footer>
</div>

<style>
	:global(body) {
		margin: 0;
		background: #393939;
		overflow: hidden;
	}

	.page {
		display: flex;
		flex-direction: column;
		width: 1920px;
		height: 1080px;
		font: 10px / 1 'DejaVu Sans', sans-serif;
		color: #111;
	}

	.ic {
		flex: none;
		display: block;
	}

	/* ---------- TITLE BAR ---------- */

	.title {
		display: flex;
		align-items: center;
		flex: 0 0 23px;
		padding-left: 5px;
		background: #fff;
	}

	.tname {
		margin-left: 4px;
		font: 11px 'Open Sans', sans-serif;
		color: #111;
	}

	.winctl {
		margin-left: auto;
	}

	/* ---------- HEADERS ---------- */

	.bar {
		position: relative;
		display: flex;
		align-items: center;
		background: #727272;
		box-sizing: border-box;
	}

	.info {
		flex: 0 0 27px;
		padding: 2px 0 0 8px;
		border-bottom: 1px solid #111;
	}

	.v3d {
		flex: 0 0 26px;
		padding-left: 9px;
		border-top: 1px solid #808080;
	}

	.menu {
		display: flex;
		padding-top: 1px;
		color: #111;
	}

	.menu-info {
		gap: 20.5px;
		margin: 0 10.7px 0 12px;
	}

	.menu-3d {
		gap: 20.5px;
		margin: 0 12.5px 0 12px;
	}

	.btn {
		display: flex;
		align-items: center;
		justify-content: center;
		box-sizing: border-box;
		height: 20px;
		padding-top: 1px;
		border: 1px solid #2f2f2f;
		border-radius: 4px;
	}

	.dark {
		background: linear-gradient(#5c5c5c, #3c3c3c);
		color: #e6e6e6;
	}

	.light {
		background: linear-gradient(#8f8f8f, #a8a8a8);
	}

	.mid {
		background: linear-gradient(#8a8a8a, #7a7a7a);
		color: #111;
	}

	.blue {
		background: linear-gradient(#5c88cc, #4b74b6);
		color: #0c1320;
	}

	.field {
		background: linear-gradient(#8e8e8e, #b0b0b0);
		color: #111;
	}

	.sel {
		width: 32px;
		gap: 2px;
		flex: none;
	}

	.ud {
		flex: none;
		fill: #a8a8a8;
	}

	.select {
		justify-content: flex-start;
		padding: 1px 3px 0 8px;
	}

	.select .ud {
		margin-left: auto;
	}

	.select :global(.ic) {
		margin-right: 4px;
	}

	.sq {
		width: 20px;
		flex: none;
	}

	.single {
		width: 19.5px;
	}

	.wide {
		width: 21px;
	}

	.group {
		display: flex;
		flex: none;
	}

	.group > .btn,
	.joined > .btn {
		border-radius: 0;
		border-right-width: 0;
	}

	.group > :first-child,
	.joined > :first-child {
		border-radius: 4px 0 0 4px;
	}

	.group > :last-child,
	.joined > :last-child {
		border-radius: 0 4px 4px 0;
		border-right-width: 1px;
	}

	.namef {
		width: 120px;
		justify-content: flex-start;
		padding-left: 7px;
	}

	.scene-group {
		margin-left: 5.5px;
	}

	.engine {
		width: 110px;
		margin-left: 17px;
	}

	.biglogo {
		margin-left: 19px;
	}

	.status {
		margin-left: 11px;
		padding-top: 1px;
		white-space: nowrap;
		letter-spacing: 0.03px;
		color: #111;
	}

	.tools {
		display: flex;
		align-items: center;
		gap: 5.5px;
	}

	.omode {
		width: 112.5px;
		padding-left: 5px;
	}

	.glob {
		width: 71px;
		padding-left: 6px;
	}

	.snap {
		width: 32px;
		padding: 0 2px;
		gap: 2px;
	}

	.snap :global(.ic) {
		margin: 0;
	}

	.layers {
		display: grid;
		grid-template-columns: repeat(5, 1fr);
		grid-template-rows: 1fr 1fr;
		gap: 1px;
		box-sizing: border-box;
		width: 49px;
		height: 20px;
		background: #3a3a3a;
		border: 1px solid #3a3a3a;
		border-radius: 4px;
		overflow: hidden;
	}

	.layers span {
		background: #8c8c8c;
	}

	.layers .act {
		background: radial-gradient(circle at center, #e89a3a 0 2px, #666 2.5px);
	}

	/* ---------- CORNER WIDGETS ---------- */

	.hatch {
		position: absolute;
		width: 11px;
		height: 11px;
		background: repeating-linear-gradient(45deg, #3a3a3a 0 1px, #9a9a9a 1px 2px, #727272 2px 3px);
		pointer-events: none;
	}

	.hatch.tr {
		top: 0;
		right: 0;
		clip-path: polygon(0 0, 100% 0, 100% 100%);
	}

	.hatch.tl {
		top: 0;
		left: 0;
		clip-path: polygon(0 0, 100% 0, 0 100%);
	}

	.hatch.bl {
		bottom: 0;
		left: 0;
		clip-path: polygon(0 0, 100% 100%, 0 100%);
	}

	.info .hatch.tl {
		top: auto;
		bottom: 0;
		clip-path: polygon(0 0, 100% 100%, 0 100%);
	}

	/* ---------- MAIN AREA ---------- */

	.main {
		display: flex;
		flex: 0 0 990px;
		min-height: 0;
	}

	.viewcol {
		display: flex;
		flex-direction: column;
		width: 1665px;
		background: #393939;
	}

	.view {
		position: relative;
		flex: 0 0 964px;
		overflow: hidden;
		background: #393939;
	}

	.scene3d {
		position: absolute;
		left: 0;
		top: 0;
		display: block;
	}

	.ovl {
		position: absolute;
		color: #f0f0f0;
		white-space: nowrap;
	}

	.persp {
		left: 20px;
		top: 13px;
	}

	.cube {
		left: 70px;
		top: 946px;
	}

	.axis {
		font-size: 12px;
	}

	.az {
		left: 27px;
		top: 904px;
		color: #1a1ac8;
	}

	.ay {
		left: 45px;
		top: 920px;
		color: #1cae1c;
	}

	.ax {
		left: 46px;
		top: 934px;
		color: #c01818;
	}

	.tab {
		top: 24px;
		width: 12px;
		height: 12px;
		line-height: 11px;
		text-align: center;
		color: #7a7a7a;
		background: #444;
		border-radius: 2px;
	}

	.tabl {
		left: 0;
	}

	.tabr {
		right: 0;
	}

	/* ---------- SIDEBAR ---------- */

	.side {
		display: flex;
		flex-direction: column;
		box-sizing: border-box;
		width: 255px;
		border-left: 1px solid #111;
		background: #727272;
	}

	.outliner {
		position: relative;
		flex: 0 0 173px;
		box-sizing: border-box;
		border-bottom: 1px solid #111;
	}

	.ohead {
		display: flex;
		align-items: center;
		height: 26px;
		padding-left: 9px;
	}

	.om {
		padding-top: 2px;
		color: #111;
	}

	.om1 {
		margin-left: 12px;
	}

	.om2 {
		margin-left: 21px;
	}

	.allsc {
		justify-content: flex-start;
		width: 115px;
		margin-left: 13px;
		padding: 2px 0 0 7px;
		border-radius: 4px 0 0 4px;
	}

	.tree {
		position: relative;
		height: 127px;
		background: repeating-linear-gradient(#757575 0 20px, #6f6f6f 20px 40px);
	}

	.treelines {
		position: absolute;
		left: 0;
		top: 0;
	}

	.row {
		position: relative;
		display: flex;
		align-items: center;
		box-sizing: border-box;
		height: 20px;
		padding: 3px 0 0 7px;
		color: #111;
	}

	.sel0 {
		width: 187px;
		background: #80868a;
	}

	.lvl {
		padding-left: 26px;
	}

	.exp {
		width: 9px;
		height: 9px;
		flex: none;
	}

	.exp svg {
		display: block;
	}

	.halo,
	.noh {
		display: flex;
		align-items: center;
		justify-content: center;
		width: 16px;
		height: 16px;
		margin: 0 6px 0 6px;
		border-radius: 50%;
		flex: none;
	}

	.sel0 .halo {
		margin: 0 4px 0 7px;
		background: #a9adb0;
	}

	.h2 {
		margin-left: 9px;
		background: #8d8d8d;
	}

	.orange {
		background: #b08048;
	}

	.white {
		color: #f2f2f2;
	}

	.bar1 {
		width: 2px;
		height: 11px;
		margin-left: 9px;
		background: #3f3f3f;
	}

	.mesh2 {
		margin-left: 11px;
	}

	.restrict {
		position: absolute;
		left: 198px;
		top: 3px;
		display: flex;
		gap: 6px;
	}

	.hscroll {
		position: relative;
		height: 12px;
		margin: 3px 5px 0 4px;
		border-radius: 6px;
		background: #5a5a5a;
	}

	.thumb {
		width: 207px;
		height: 100%;
		border-radius: 6px;
		background: linear-gradient(#8f8f8f, #a8a8a8);
		box-shadow: inset 0 0 0 1px #444;
	}

	.props {
		position: relative;
		flex: 1;
		min-height: 0;
	}

	.phead {
		display: flex;
		align-items: center;
		height: 26px;
		padding-left: 9px;
	}

	.tabs {
		display: flex;
		margin-left: 7.5px;
		overflow: hidden;
		width: 206px;
	}

	.ptab {
		display: flex;
		align-items: center;
		justify-content: center;
		flex: 0 0 20px;
		box-sizing: border-box;
		height: 19px;
		border: 1px solid #333;
		border-left-width: 0;
		background: #484848;
	}

	.ptab.on {
		border: 1px solid #4a7bc4;
		border-radius: 3px 0 0 3px;
		background: #7c7c7c;
	}

	.crumb {
		display: flex;
		align-items: center;
		height: 36px;
		padding-left: 10px;
	}

	.crumbscene {
		margin: 0 6px 0 8px;
	}

	.crumbname {
		padding-top: 1px;
	}

	.panels {
		margin: 0 4px 0 4px;
	}

	/* ---------- SECTIONS ---------- */

	.sec {
		box-sizing: border-box;
		border-top: 1px solid #4a4a4a;
		box-shadow: inset 0 1px 0 #7f7f7f;
	}

	.shead {
		display: flex;
		align-items: center;
		height: 23px;
		padding: 0 6px 0 8px;
		font-size: 11px;
		color: #151515;
	}

	.tri {
		flex: none;
		margin-right: 5px;
		fill: #2a2a2a;
	}

	.shead .check {
		margin-right: 5px;
	}

	.stitle {
		flex: 1;
	}

	.grip {
		width: 11px;
		height: 5px;
		background: radial-gradient(circle, #3f3f3f 0 0.7px, transparent 0.8px) 0 0 / 3px 2.5px;
	}

	.body {
		padding: 0 3px 0 3px;
	}

	.lbl {
		color: #111;
	}

	.render-body {
		padding-top: 8px;
		padding-bottom: 8px;
	}

	.joined {
		display: flex;
	}

	.r3 > .wide1 {
		justify-content: flex-start;
		gap: 6px;
		padding-left: 4px;
		flex: 1;
		min-width: 0;
		white-space: nowrap;
	}

	.r3 > .wide1 span {
		flex: 1;
		padding-right: 10px;
		text-align: center;
	}

	.disp {
		display: flex;
		align-items: center;
		margin-top: 5px;
		padding-left: 8px;
	}

	.disp .lbl {
		padding-top: 2px;
	}

	.dispsel {
		margin-left: auto;
		width: 155px;
	}

	.imged {
		flex: 1;
		padding-left: 7px;
	}

	.dim-body {
		padding-top: 8px;
		padding-bottom: 8.5px;
	}

	.presets .pres {
		flex: 1;
	}

	.cols {
		display: grid;
		grid-template-columns: 114.5px 114px;
		gap: 9.5px;
	}

	.col {
		display: flex;
		flex-direction: column;
		min-width: 0;
	}

	.lh,
	.lh2,
	.lh3 {
		display: flex;
		align-items: center;
		padding-left: 7px;
	}

	.lh {
		box-sizing: border-box;
		height: 25.5px;
		padding-top: 5px;
	}

	.lh2 {
		height: 22px;
	}

	.lh3 {
		height: 20px;
	}

	.stack {
		display: flex;
		flex-direction: column;
		box-sizing: border-box;
		border: 1px solid #2f2f2f;
		border-radius: 8px;
		overflow: hidden;
		background: #2f2f2f;
		gap: 1px;
	}

	.num {
		position: relative;
		display: flex;
		align-items: center;
		justify-content: space-between;
		box-sizing: border-box;
		height: 18px;
		padding: 1px 15px 0 14px;
		background: linear-gradient(#9c9c9c, #b6b6b6);
		white-space: nowrap;
	}

	.num::before,
	.num::after {
		content: '';
		position: absolute;
		top: 50%;
		margin-top: -3.5px;
		border: 3.5px solid transparent;
	}

	.num::before {
		left: 3px;
		border-right: 4px solid #6b6b6b;
		border-left-width: 0;
	}

	.num::after {
		right: 3px;
		border-left: 4px solid #6b6b6b;
		border-right-width: 0;
	}

	.hz {
		flex-direction: row;
		height: 20px;
	}

	.hz .num {
		flex: 1;
		height: 100%;
		justify-content: center;
		padding: 1px 0 0;
	}

	.slider {
		position: relative;
		display: flex;
		align-items: center;
		justify-content: space-between;
		box-sizing: border-box;
		height: 19px;
		padding: 1px 15px 0 14px;
		background: linear-gradient(#a8a8a8, #b6b6b6);
		white-space: nowrap;
		overflow: hidden;
	}

	.slider span {
		position: relative;
	}

	.fill {
		position: absolute;
		left: 0;
		top: 0;
		bottom: 0;
		background: linear-gradient(#5a5a5a, #6e6e6e);
	}

	.bc {
		display: grid;
		grid-template-columns: 61px 1fr;
		margin-top: 5px;
	}

	.cb {
		display: flex;
		align-items: center;
		height: 15px;
		padding-left: 3px;
		gap: 8px;
		white-space: nowrap;
		color: #111;
	}

	.cols > .cb:first-child,
	.bc > .cb:first-child {
		padding-left: 4px;
	}

	.cbinner {
		display: flex;
	}

	.muted {
		color: #4c4c4c;
	}

	.check {
		display: block;
		flex: none;
		box-sizing: border-box;
		width: 14px;
		height: 14px;
		border: 1px solid #333;
		border-radius: 4px;
		background: linear-gradient(#5a5a5a, #474747);
		position: relative;
	}

	.check svg {
		position: absolute;
		left: -1px;
		top: -2px;
	}

	.check.dim {
		opacity: 0.6;
	}

	.aa-body {
		padding-top: 8px;
		padding-bottom: 8px;
	}

	.aa > .btn {
		flex: 1;
		min-width: 0;
	}

	.aa2 {
		align-items: center;
		margin-top: 3px;
	}

	.aa2 .stack {
		height: 19.5px;
	}

	.aa2 .num {
		height: 100%;
	}

	.out-body {
		padding-top: 9px;
		padding-bottom: 9px;
	}

	.path {
		height: 19.5px;
	}

	.path .btn {
		height: 100%;
	}

	.pathf {
		flex: 1;
		box-sizing: border-box;
		padding: 4px 0 0 6px;
		border: 1px solid #2f2f2f;
		border-right: 0;
		border-radius: 6px 0 0 6px;
		background: linear-gradient(#8e8e8e, #b0b0b0);
	}

	.chk {
		align-items: center;
		height: 22px;
	}

	.chk1 {
		margin-top: 4.5px;
	}

	.fmt {
		margin-top: 3px;
	}

	.pngs {
		padding-left: 4px;
	}

	.bw > .btn {
		flex: 1;
		min-width: 0;
	}

	.bw > .blue {
		flex: 0 0 40px;
	}

	.depth {
		display: flex;
		align-items: center;
		height: 20px;
		margin: 3px 0 1px;
		padding-left: 8px;
	}

	.dep {
		width: 154px;
		margin-left: auto;
	}

	.dep > .btn {
		flex: 1;
	}

	.out-body > .slider {
		height: 20px;
		border: 1px solid #2f2f2f;
		border-radius: 9px;
	}

	/* ---------- TASKBAR ---------- */

	.task {
		display: flex;
		align-items: center;
		flex: 0 0 40px;
		background: #463d30;
		color: #fff;
	}

	.start {
		margin: 0 16px;
	}

	.search {
		display: flex;
		align-items: center;
		box-sizing: border-box;
		width: 344px;
		height: 40px;
		padding-left: 10px;
		background: #f2f2f2;
		color: #444;
		font: 14px 'Open Sans', sans-serif;
	}

	.cortana {
		box-sizing: border-box;
		width: 20px;
		height: 20px;
		border: 3px solid #111;
		border-radius: 50%;
	}

	.stext {
		margin-left: 10px;
	}

	.mic {
		margin-left: auto;
		margin-right: 15px;
	}

	.apps {
		display: flex;
		margin-left: 1px;
	}

	.app {
		position: relative;
		display: flex;
		align-items: center;
		justify-content: center;
		box-sizing: border-box;
		width: 49px;
		height: 40px;
	}

	.mail svg {
		margin-left: 6px;
	}

	.on::after,
	.cur::after {
		content: '';
		position: absolute;
		left: 4px;
		right: 4px;
		bottom: 0;
		height: 2px;
		background: #c9b89f;
	}

	.cur {
		background: #5a5141;
	}

	.cur::after {
		left: 0;
		right: 0;
	}

	.tray {
		position: relative;
		display: flex;
		align-items: center;
		margin-left: auto;
		height: 40px;
	}

	.people {
		margin-right: 21px;
	}

	.chev {
		margin-right: 9px;
	}

	.cloud {
		margin-right: 7px;
	}

	.wifi {
		margin-right: 7px;
	}

	.vol {
		margin-right: 5px;
	}

	.clock {
		display: flex;
		flex-direction: column;
		align-items: center;
		gap: 3px;
		width: 60px;
		font: 12px / 1.2 'Open Sans', sans-serif;
		color: #fff;
	}

	.note {
		margin: 0 25px 0 14px;
	}
</style>
